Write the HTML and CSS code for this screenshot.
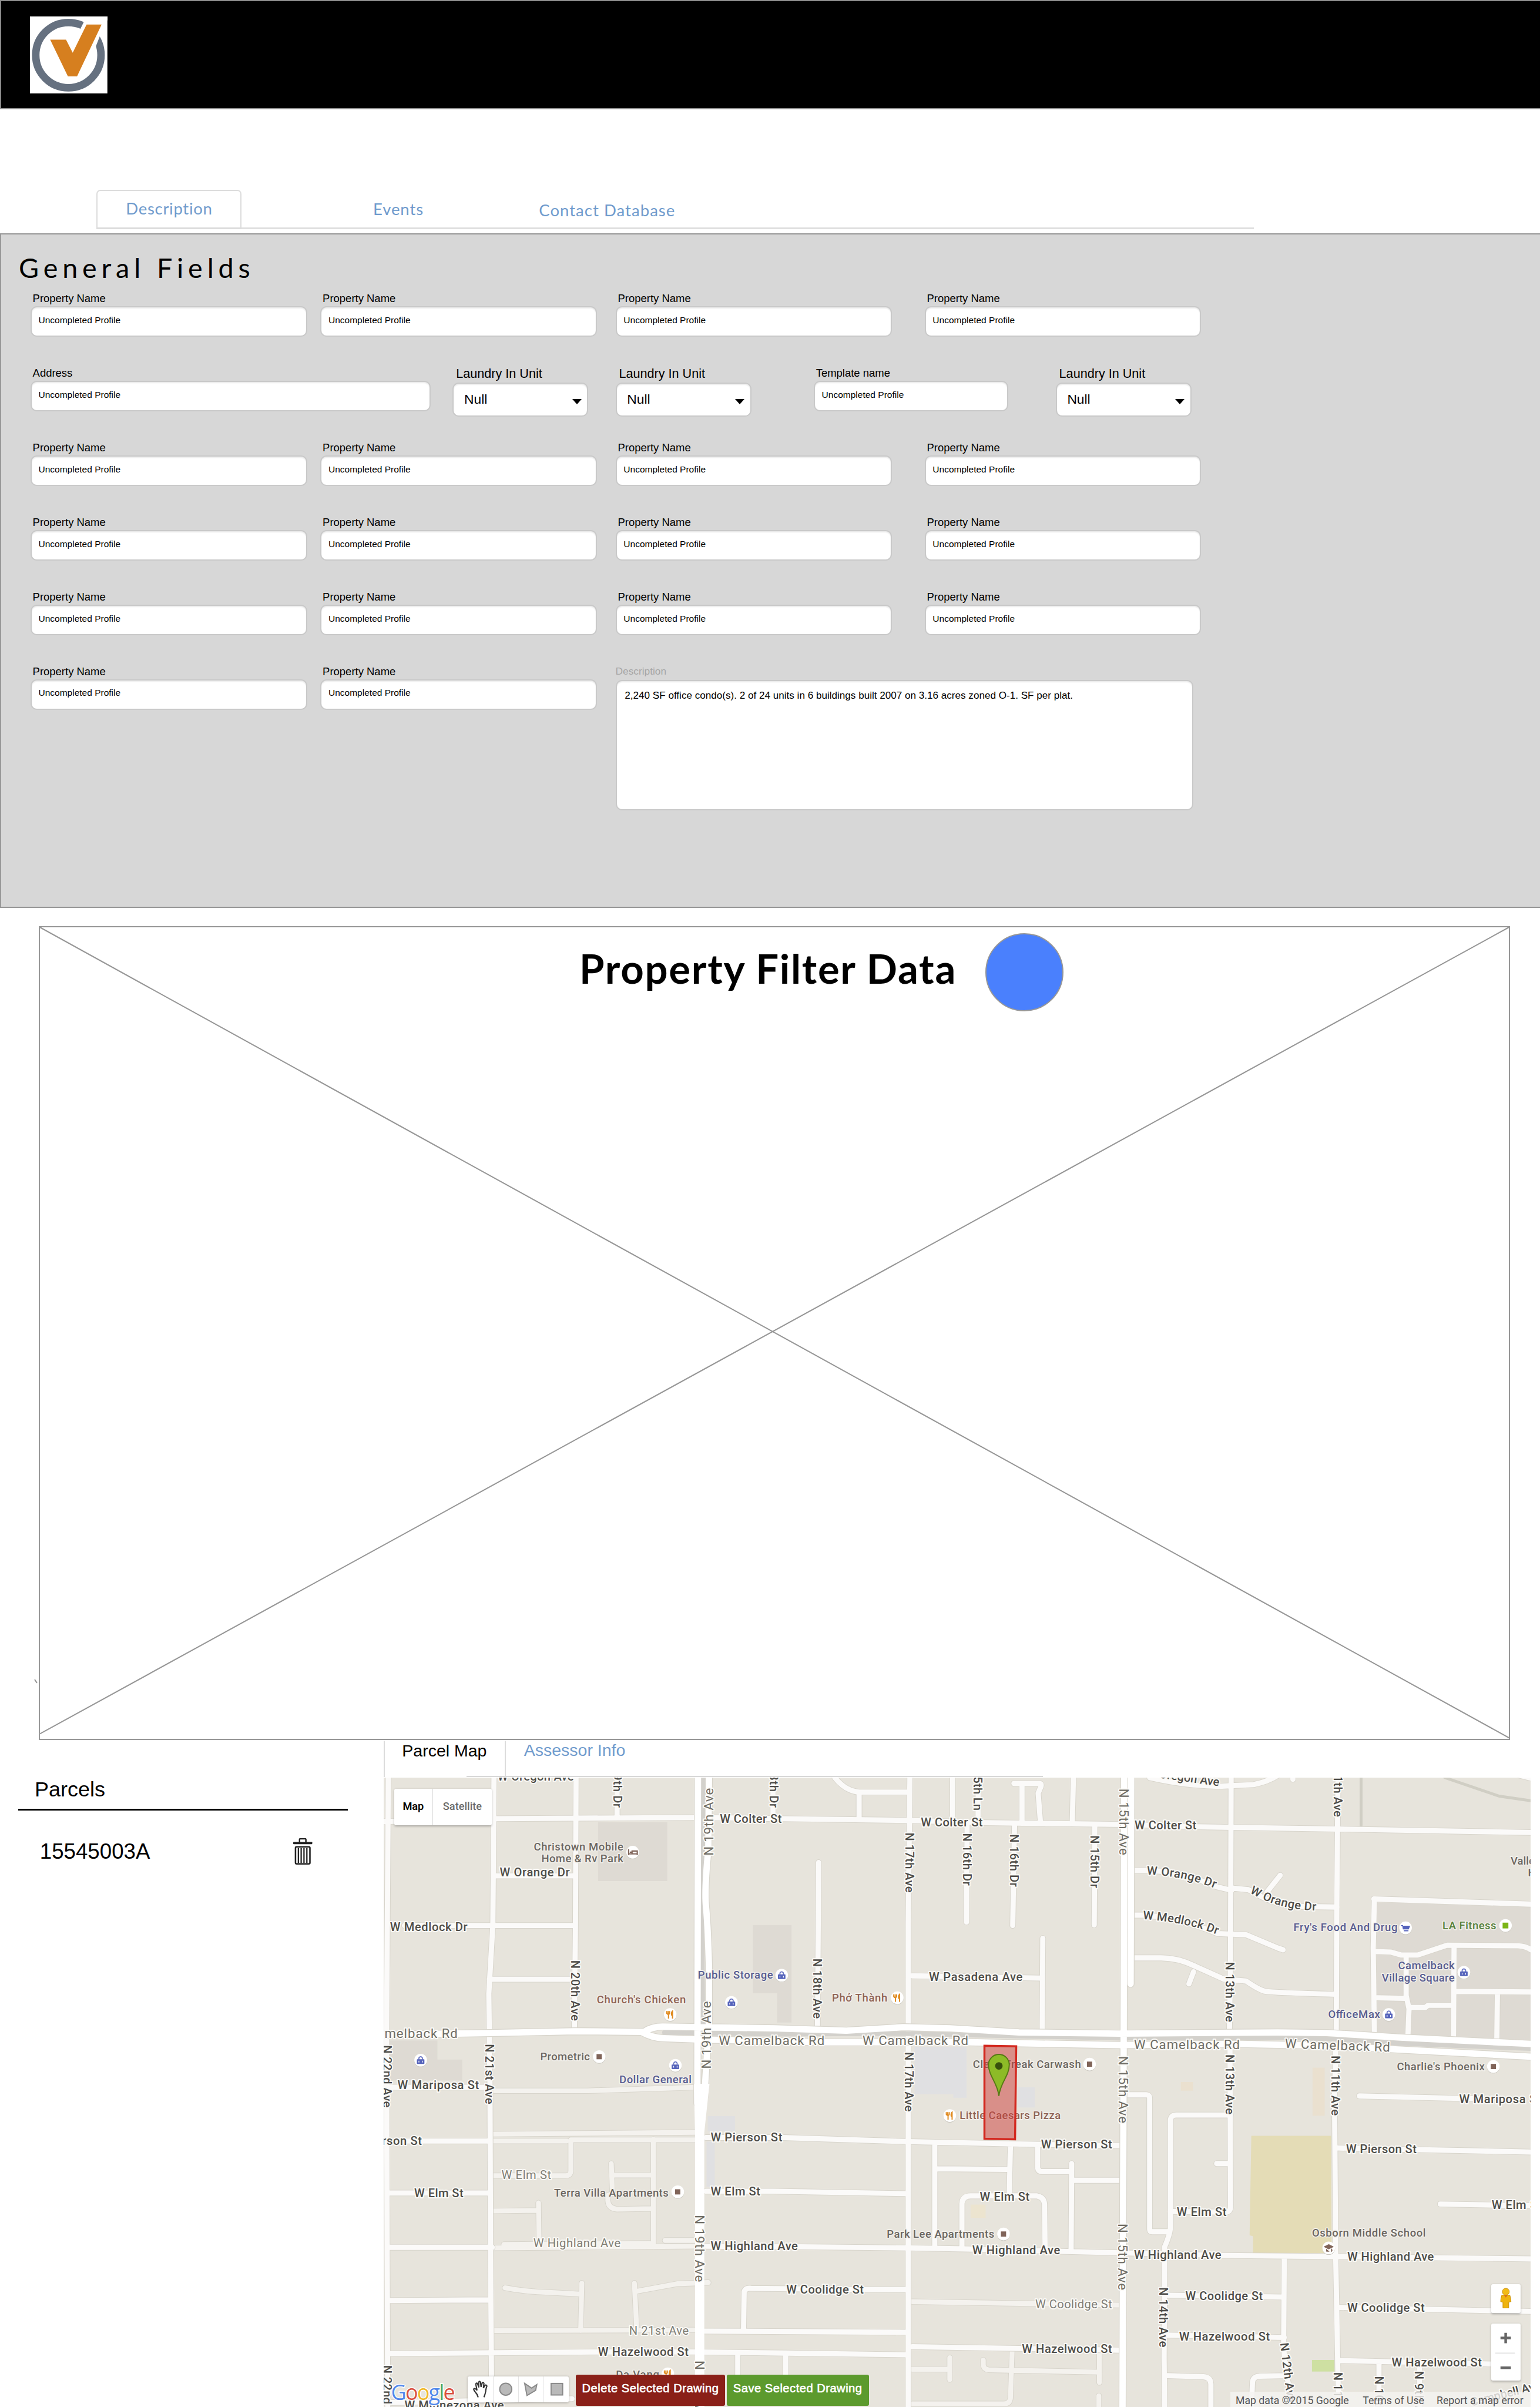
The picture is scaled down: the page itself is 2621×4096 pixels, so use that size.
FILE: index.html
```html
<!DOCTYPE html>
<html lang="en">
<head>
<meta charset="utf-8">
<title>Property Profile</title>
<link rel="stylesheet" href="styles.css">
</head>
<body>
<div class="page">
  <header class="topbar">
    <svg class="logo" viewBox="52 28 134 134">
      <rect x="52" y="28" width="134" height="134" fill="#fff"/>
      <circle cx="118.5" cy="95" r="56.5" fill="none" stroke="#667180" stroke-width="13"/>
      <path d="M139 50L151 26H190L173 62L166 80L140 70Z" fill="#fff"/>
      <path d="M87 68.3H114.4L126 90.7L150 42H176L133.5 131.7H117.7Z" fill="#d67f1f"/>
    </svg>
  </header>

  <nav class="tabs">
    <a class="tab tab-active">Description</a>
    <a class="tab tab-events">Events</a>
    <a class="tab tab-contact">Contact Database</a>
  </nav>

  <section class="panel">
    <h1 class="panel-title">General Fields</h1>
    <div class="row">
      <label class="field"><span class="label">Property Name</span><span class="input">Uncompleted Profile</span></label>
      <label class="field"><span class="label">Property Name</span><span class="input">Uncompleted Profile</span></label>
      <label class="field"><span class="label">Property Name</span><span class="input">Uncompleted Profile</span></label>
      <label class="field"><span class="label">Property Name</span><span class="input">Uncompleted Profile</span></label>
    </div>
    <div class="row row-address">
      <label class="field field-wide"><span class="label">Address</span><span class="input">Uncompleted Profile</span></label>
      <label class="field field-select"><span class="label">Laundry In Unit</span><span class="select">Null<i class="caret"></i></span></label>
      <label class="field field-select"><span class="label">Laundry In Unit</span><span class="select">Null<i class="caret"></i></span></label>
      <label class="field field-template"><span class="label">Template name</span><span class="input">Uncompleted Profile</span></label>
      <label class="field field-select"><span class="label">Laundry In Unit</span><span class="select">Null<i class="caret"></i></span></label>
    </div>
    <div class="row">
      <label class="field"><span class="label">Property Name</span><span class="input">Uncompleted Profile</span></label>
      <label class="field"><span class="label">Property Name</span><span class="input">Uncompleted Profile</span></label>
      <label class="field"><span class="label">Property Name</span><span class="input">Uncompleted Profile</span></label>
      <label class="field"><span class="label">Property Name</span><span class="input">Uncompleted Profile</span></label>
    </div>
    <div class="row">
      <label class="field"><span class="label">Property Name</span><span class="input">Uncompleted Profile</span></label>
      <label class="field"><span class="label">Property Name</span><span class="input">Uncompleted Profile</span></label>
      <label class="field"><span class="label">Property Name</span><span class="input">Uncompleted Profile</span></label>
      <label class="field"><span class="label">Property Name</span><span class="input">Uncompleted Profile</span></label>
    </div>
    <div class="row">
      <label class="field"><span class="label">Property Name</span><span class="input">Uncompleted Profile</span></label>
      <label class="field"><span class="label">Property Name</span><span class="input">Uncompleted Profile</span></label>
      <label class="field"><span class="label">Property Name</span><span class="input">Uncompleted Profile</span></label>
      <label class="field"><span class="label">Property Name</span><span class="input">Uncompleted Profile</span></label>
    </div>
    <div class="row">
      <label class="field"><span class="label">Property Name</span><span class="input">Uncompleted Profile</span></label>
      <label class="field"><span class="label">Property Name</span><span class="input">Uncompleted Profile</span></label>
      <label class="field field-description"><span class="label">Description</span><span class="textarea">2,240 SF office condo(s). 2 of 24 units in 6 buildings built 2007 on 3.16 acres zoned O-1. SF per plat.</span></label>
    </div>
  </section>

  <section class="placeholder">
    <svg class="cross" viewBox="0 0 2543 1405" preserveAspectRatio="none">
      <path d="M0 0L2545 1404M0 1396L2543 0"/>
    </svg>
    <svg class="tick" viewBox="0 0 6 8"><path d="M1 1L5 7"/></svg>
    <h2 class="placeholder-title">Property Filter Data</h2>
    <span class="dot"></span>
  </section>

  <div class="lower">
    <aside class="parcels">
      <h3 class="parcels-title">Parcels</h3>
      <div class="parcel">
        <span>15545003A</span>
        <svg class="trash" viewBox="0 0 33 46">
          <path d="M11 7V2.5Q11 1 12.500 1H20.500Q22 1 22 2.500V7" fill="none" stroke="#222" stroke-width="2.500"/>
          <rect x="0" y="6.500" width="33" height="3.800" rx="1" fill="#222"/>
          <rect x="4" y="15" width="25" height="29.500" rx="2" fill="none" stroke="#222" stroke-width="2.600"/>
          <path d="M9 17V43M13.800 17V43M18.700 17V43M23.700 17V43" stroke="#222" stroke-width="2.300"/>
        </svg>
      </div>
    </aside>

    <section class="map-area">
      <nav class="map-tabs">
        <a class="map-tab map-tab-active">Parcel Map</a>
        <a class="map-tab">Assessor Info</a>
      </nav>
      <div class="map">
        <svg class="map-canvas" viewBox="664 3076 1986 1090">
          <defs>
            <g id="pale">
              <path d="M854 3693L1205 3690M731 3705H981M988 3703H1207M988 3703V3756Q988 3765 979 3765H854M1131 3702V3888M1058 3744L1060 3796L1052 3799V3808Q1053 3822 1068 3823L1131 3822M1064 3764H1130M855 3826L932 3825M932 3812L933 3884M872 3884L1124 3882M1151 3877H1203M852 3890L1202 3887M874 3959Q910 3966 950 3967L1005 3970M1007 3951L1005 4033M1098 3951L1102 4030M1102 3965L1173 3952L1226 3950M856 4033L1202 4032M1579 3983L1940 3989M1579 4100H1644M1644 4080V4118M1702 4084V4093Q1703 4100 1711 4101L1902 4105M1903 4070V4123M1902 4146V4170M1752 4066L1749 4150Q1748 4160 1737 4160H1579M854 3618H1017L1202 3612"/>
            </g>
            <g id="minor">
              <path d="M672 3076L669 3520L670 3900L671 4166M855 3076L853 3331L846 3450L848 3606L849 3900L851 4166M997 3076L996 3331L994 3515M1068 3076V3145M1338 3076V3145M664 3152L858 3147L1202 3145L1353 3147L1568 3150L1706 3154L1943 3157L2072 3161L2314 3165L2650 3171M700 3332H993M847 3425H994M858 3246H996M673 3612H846M664 3705H848M673 3795H848M673 3889H852M673 3981L848 3980M673 4073L1035 4070H1200L1360 4072L1568 4075M664 4158L990 4151"/>
              <path d="M1445 3076Q1463 3099 1487 3101H1572M1487 3101V3148M1575 3076L1572 3331V3520L1572 4166M1649 3076V3152M1693 3076V3153M1755 3086H1800Q1803 3087 1802 3091L1797 3103L1801 3154M1769 3087V3155M1858 3076L1856 3156M1674 3156L1673 3326M1756 3158L1753 3332M1895 3160L1894 3331M1417 3223L1415 3508M1805 3354L1804 3514M1579 3419L1802 3423M1960 3237H1990Q2045 3238 2106 3265L2132 3271M1960 3314H1980Q2040 3318 2108 3346L2157 3348L2212 3371L2221 3374M2132 3267L2161 3270Q2212 3300 2250 3299L2314 3300M2193 3274L2216 3245M1960 3388H2010Q2040 3388 2070 3403L2119 3425L2157 3428Q2180 3444 2191 3446T2312 3451M2066 3412L2058 3433"/>
              <path d="M2131 3076L2130 3392L2128 3519M2129 3535L2130 3820Q2129 3829 2120 3828L2026 3827M1990 3076Q2050 3090 2110 3091L2170 3088Q2195 3083 2212 3072M2238 3070V3079M2316 3076L2314 3300L2313 3520L2310 3620L2312 3900L2317 4166M2378 3286L2650 3295M2379 3286L2377 3371L2379 3521M2380 3377L2408 3378L2425 3383H2454L2505 3366L2628 3367Q2642 3368 2650 3374M2434 3385V3453L2439 3476L2437 3524M2384 3457L2433 3458M2442 3474H2467L2472 3470H2514M2517 3367L2516 3524M2520 3446L2650 3447M2592 3449L2591 3531M2630 3072L2655 3078"/>
              <path d="M1222 3699H1355L1572 3706L1800 3711L1938 3713M1222 3792H1340L1568 3796M1222 3887L1385 3888L1572 3890L1684 3892L1836 3896L1960 3899L2115 3903L2314 3905L2650 3909M1218 4034L1568 4036M1287 4031L1288 3966Q1290 3959 1300 3960L1496 3962H1570M1277 4074V4120M1360 4074V4120M1618 3709V3888M1621 3753L1744 3754M1749 3710L1747 3799M1665 3888V3813Q1666 3800 1680 3800H1795Q1807 3802 1808 3814L1809 3892M1796 3713V3751Q1797 3758 1804 3758H1853M1855 3744L1854 3894M1860 3773H1940M1579 4061L1938 4067M1952 3625H1984Q1990 3625 1990 3631V3858Q1990 3862 1994 3862H2025M2130 3660H2036Q2026 3660 2026 3670V3856Q2024 3870 2016 3888L2015 4080L2016 4170M2106 3744H2127M2353 3627L2560 3632M2314 3717L2650 3724M2493 3814L2650 3817M2223 3908L2222 4060Q2224 4110 2240 4166M2021 3972L2219 3975M2021 4041L2223 4045M2319 3993L2650 4000M2319 4085L2582 4091M2387 4088V4170M2457 4092V4170M2021 4111L2083 4113Q2096 4114 2096 4126V4170M2166 4170L2168 4122Q2169 4113 2180 4112L2229 4111"/>
            </g>
            <g id="major">
              <path d="M1208 3076L1207 3640M1227 3076L1226 3200Q1219 3270 1222 3300T1227 3400V3500L1219 3630M1946 3076L1945 3520L1943 4170M1958 3076L1957 3433M664 3521L848 3518L995 3515L1115 3516Q1128 3507 1147 3507L1340 3510L1465 3514L1563 3508L1644 3510L1764 3517L1938 3519L2212 3517L2297 3518L2425 3526L2650 3537M1112 3517Q1128 3526 1147 3527L1202 3529L1427 3534H1677L1938 3539L2147 3537L2297 3540L2650 3559"/>
            </g>
            <g id="pin-bg"><circle r="11" fill="#c9c6be" cy="1"/><circle r="11" fill="#fff"/></g>
            <g id="shop"><use href="#pin-bg"/><path d="M-3 -1V-4Q0 -8 3 -4V-1" fill="none" stroke="#6672c4" stroke-width="1.800"/><rect x="-6.500" y="-1.500" width="13" height="8" rx="1" fill="#5563bb"/><path d="M-3 4V1M3 4V1" stroke="#fff" stroke-width="1.300"/></g>
            <g id="cart"><use href="#pin-bg"/><path d="M-8 -4H-5L-4 2H5L7 -3H-5" fill="#5563bb" stroke="#5563bb" stroke-width="1.500"/><path d="M-3 5H5" stroke="#5563bb" stroke-width="2"/></g>
            <g id="food"><use href="#pin-bg"/><path d="M-3 7V0M-6 -6V-2Q-3 2 -1 -2V-6M-3.500 -6V0M4 7V-6Q1.500 -4 2.500 1H4" fill="none" stroke="#e08a1e" stroke-width="2"/></g>
            <g id="place"><use href="#pin-bg"/><rect x="-4.500" y="-4.500" width="9" height="9" fill="#806459"/></g>
            <g id="lodging"><use href="#pin-bg"/><path d="M-7 5V-5M-7 3H8V5M8 3V-2H-1V2M-5 0H-2" fill="none" stroke="#806459" stroke-width="2.200"/></g>
            <path id="orange1" d="M1985 3244Q2045 3245 2104 3268"/>
            <path id="orange2" d="M2163 3275Q2215 3306 2283 3306"/>
            <path id="medlock" d="M1978 3321Q2050 3325 2108 3348"/>
          </defs>

          <rect x="664" y="3076" width="1986" height="1090" fill="#e7e4dc"/>
          <path d="M1035 3153H1155V3255H1035ZM1303 3331H1370V3500H1345V3449H1303ZM673 3531H757V3564H800V3600H673ZM2384 3292L2650 3297V3536L2384 3524Z" fill="#dedad3"/>
          <path d="M1225 3662H1272V3688H1225ZM1223 3706H1237V3784H1223ZM1583 3542H1673V3630H1650V3624H1583ZM1762 3612H1791V3647H1762Z" fill="#e0e0e2"/>
          <path d="M2272 3578H2293V3661H2272ZM2044 3603H2065V3618H2044Z" fill="#eae0cf"/>
          <path d="M1680 3815H1706V3838H1680Z" fill="#ece4cf"/>
          <path d="M2166 3696H2304L2305 3899H2169V3870L2163 3868Z" fill="#e4dcb6"/>
          <rect x="2271" y="4084" width="39" height="20" fill="#cee0a2"/>
          <path class="track" d="M2356 3076V3159M2501 3076L2595 3108L2650 3116"/>
          <use href="#pale" class="casing"/><use href="#pale" class="road road-pale"/>
          <use href="#minor" class="casing casing-minor"/><use href="#minor" class="road road-minor"/>
          <use href="#major" class="casing casing-major"/>
          <path class="rail" d="M1217 3076V3230L1214 3290L1217 3510M1150 3517L1340 3520L1563 3519L1938 3527L2212 3526L2297 3528L2425 3536L2650 3545"/>
          <use href="#major" class="road road-major"/>
          <path d="M1201 3606H1228L1219 3690V4166H1203V3690Z" fill="#fff"/>

          <g class="street">
            <text x="861" y="3081" textLength="132">W Oregon Ave</text>
            <text x="1983" y="3073" textLength="128" transform="rotate(8 1983 3073)">W Oregon Ave</text>
            <text x="675" y="3341" textLength="134">W Medlock Dr</text>
            <text x="1246" y="3154" textLength="107">W Colter St</text>
            <text x="1594" y="3160" textLength="107">W Colter St</text>
            <text x="1964" y="3166" textLength="107">W Colter St</text>
            <text x="865" y="3247" textLength="121">W Orange Dr</text>
            <text textLength="121"><textPath href="#orange1">W Orange Dr</textPath></text>
            <text textLength="121"><textPath href="#orange2">W Orange Dr</textPath></text>
            <text textLength="132"><textPath href="#medlock">W Medlock Dr</textPath></text>
            <text x="688" y="3615" textLength="141">W Mariposa St</text>
            <text x="2526" y="3640" textLength="141">W Mariposa St</text>
            <text x="606" y="3712" textLength="124">W Pierson St</text>
            <text x="1230" y="3706" textLength="124">W Pierson St</text>
            <text x="1802" y="3718" textLength="123">W Pierson St</text>
            <text x="2330" y="3726" textLength="122">W Pierson St</text>
            <text x="717" y="3802" textLength="85">W Elm St</text>
            <text x="1230" y="3799" textLength="86">W Elm St</text>
            <text x="1696" y="3808" textLength="86">W Elm St</text>
            <text x="2037" y="3835" textLength="86">W Elm St</text>
            <text x="2582" y="3823" textLength="86">W Elm St</text>
            <text x="1230" y="3894" textLength="151">W Highland Ave</text>
            <text x="1683" y="3901" textLength="152">W Highland Ave</text>
            <text x="1963" y="3909" textLength="151">W Highland Ave</text>
            <text x="2332" y="3912" textLength="150">W Highland Ave</text>
            <text x="1361" y="3969" textLength="134">W Coolidge St</text>
            <text x="2052" y="3980" textLength="134">W Coolidge St</text>
            <text x="2332" y="4001" textLength="134">W Coolidge St</text>
            <text x="1035" y="4077" textLength="157">W Hazelwood St</text>
            <text x="1769" y="4072" textLength="156">W Hazelwood St</text>
            <text x="2041" y="4050" textLength="157">W Hazelwood St</text>
            <text x="2409" y="4095" textLength="156">W Hazelwood St</text>
            <text x="700" y="4169" textLength="172">W Minnezona Ave</text>
            <text x="1608" y="3428" textLength="162">W Pasadena Ave</text>
            <text x="2547" y="4164" textLength="125" transform="rotate(-14 2547 4164)">Campbell Ave</text>
            <text transform="translate(988 3392) rotate(90)" textLength="105">N 20th Ave</text>
            <text transform="translate(1062 3036) rotate(90)" textLength="92">N 19th Dr</text>
            <text transform="translate(1332 3036) rotate(90)" textLength="92">N 18th Dr</text>
            <text transform="translate(1567 3171) rotate(90)" textLength="104">N 17th Ave</text>
            <text transform="translate(1566 3551) rotate(90)" textLength="103">N 17th Ave</text>
            <text transform="translate(1667 3172) rotate(90)" textLength="91">N 16th Dr</text>
            <text transform="translate(1748 3174) rotate(90)" textLength="91">N 16th Dr</text>
            <text transform="translate(1888 3176) rotate(90)" textLength="91">N 15th Dr</text>
            <text transform="translate(1685 3042) rotate(90)" textLength="91">N 15th Ln</text>
            <text transform="translate(1408 3389) rotate(90)" textLength="104">N 18th Ave</text>
            <text transform="translate(840 3537) rotate(90)" textLength="104">N 21st Ave</text>
            <text transform="translate(663 3539) rotate(90)" textLength="108">N 22nd Ave</text>
            <text transform="translate(663 4093) rotate(90)" textLength="108">N 22nd Ave</text>
            <text transform="translate(2007 3958) rotate(90)" textLength="104">N 14th Ave</text>
            <text transform="translate(2216 4055) rotate(83)" textLength="104">N 12th Ave</text>
            <text transform="translate(2309 3040) rotate(90)" textLength="104">N 11th Ave</text>
            <text transform="translate(2305 3557) rotate(90)" textLength="104">N 11th Ave</text>
            <text transform="translate(2309 4105) rotate(90)" textLength="104">N 11th Ave</text>
            <text transform="translate(2380 4112) rotate(90)" textLength="104">N 10th Ave</text>
            <text transform="translate(2449 4103) rotate(90)" textLength="96">N 9th Ave</text>
            <text transform="translate(2122 3395) rotate(90)" textLength="104">N 13th Ave</text>
            <text transform="translate(2122 3555) rotate(90)" textLength="104">N 13th Ave</text>
          </g>
          <g class="street street-light">
            <text x="868" y="3771" textLength="86">W Elm St</text>
            <text x="923" y="3889" textLength="151">W Highland Ave</text>
            <text x="1792" y="3994" textLength="133">W Coolidge St</text>
            <text x="1089" y="4040" textLength="103">N 21st Ave</text>
          </g>
          <g class="street street-major">
            <text x="609" y="3527" textLength="183">W Camelback Rd</text>
            <text x="1244" y="3539" textLength="183">W Camelback Rd</text>
            <text x="1493" y="3539" textLength="183">W Camelback Rd</text>
            <text x="1963" y="3546" textLength="183">W Camelback Rd</text>
            <text x="2224" y="3544" textLength="182" transform="rotate(2 2224 3544)">W Camelback Rd</text>
            <text transform="translate(1235 3211) rotate(-90)" textLength="117">N 19th Ave</text>
            <text transform="translate(1231 3580) rotate(-90)" textLength="117">N 19th Ave</text>
            <text transform="translate(1203 3833) rotate(90)" textLength="116">N 19th Ave</text>
            <text transform="translate(1203 4085) rotate(90)" textLength="116">N 19th Ave</text>
            <text transform="translate(1937 3095) rotate(90)" textLength="115">N 15th Ave</text>
            <text transform="translate(1936 3558) rotate(90)" textLength="116">N 15th Ave</text>
            <text transform="translate(1935 3848) rotate(90)" textLength="115">N 15th Ave</text>
          </g>
          <g class="poi">
            <text x="924" y="3202" textLength="155">Christown Mobile</text>
            <text x="937" y="3222" textLength="142">Home &amp; Rv Park</text>
            <text x="935" y="3565" textLength="86">Prometric</text>
            <text x="1684" y="3578" textLength="187">Clean Freak Carwash</text>
            <text x="959" y="3801" textLength="198">Terra Villa Apartments</text>
            <text x="1535" y="3872" textLength="186">Park Lee Apartments</text>
            <text x="2271" y="3870" textLength="197">Osborn Middle School</text>
            <text x="2418" y="3583" textLength="152">Charlie's Phoenix</text>
            <text x="2615" y="3227">Valley</text>
            <text x="2645" y="3247">Ho</text>
            <text x="1066" y="4116" textLength="75">Da Vang</text>
          </g>
          <g class="poi poi-shop">
            <text x="1072" y="3605" textLength="125">Dollar General</text>
            <text x="1208" y="3424" textLength="130">Public Storage</text>
            <text x="2239" y="3341" textLength="180">Fry's Food And Drug</text>
            <text x="2420" y="3408" textLength="98">Camelback</text>
            <text x="2392" y="3429" textLength="126">Village Square</text>
            <text x="2299" y="3492" textLength="90">OfficeMax</text>
          </g>
          <g class="poi poi-food">
            <text x="1033" y="3467" textLength="154">Church's Chicken</text>
            <text x="1440" y="3464" textLength="96">Phở Thành</text>
            <text x="1661" y="3667" textLength="175">Little Caesars Pizza</text>
          </g>
          <g class="poi poi-fitness"><text x="2497" y="3338" textLength="93">LA Fitness</text></g>

          <use href="#lodging" x="1095" y="3205"/>
          <use href="#place" x="1037" y="3559"/>
          <use href="#place" x="1886" y="3572"/>
          <use href="#place" x="1173" y="3793"/>
          <use href="#place" x="1737" y="3866"/>
          <use href="#place" x="2585" y="3576"/>
          <use href="#shop" x="1169" y="3574"/>
          <use href="#shop" x="1353" y="3418"/>
          <use href="#shop" x="1266" y="3465"/>
          <use href="#shop" x="728" y="3565"/>
          <use href="#shop" x="2534" y="3413"/>
          <use href="#shop" x="2404" y="3486"/>
          <use href="#cart" x="2433" y="3336"/>
          <use href="#food" x="1160" y="3486"/>
          <use href="#food" x="1553" y="3457"/>
          <use href="#food" x="1644" y="3661"/>
          <use href="#food" x="1156" y="4108"/>
          <g transform="translate(2606 3332)"><use href="#pin-bg"/><rect x="-5" y="-5" width="10" height="10" fill="#7cb518"/></g>
          <g transform="translate(2300 3890)"><use href="#pin-bg"/><path d="M-8 -2L0 -6L8 -2L0 2ZM-4 2V6H1M4 1Q8 4 4 7" fill="#806459" stroke="#806459"/></g>

          <path d="M1704 3540L1759 3541L1757 3702L1704 3701Z" fill="#cb3a35" fill-opacity=".5" stroke="#d3281f" stroke-width="3.500"/>
          <path d="M1729 3627C1727 3605 1711 3592 1711 3573A18 18 0 0 1 1747 3573C1747 3592 1731 3605 1729 3627Z" fill="#8dbb27" stroke="#567a14" stroke-width="2"/>
          <circle cx="1729" cy="3575" r="6.500" fill="#38500c"/>
        </svg>

        <div class="map-type"><b>Map</b><span>Satellite</span></div>
        <div class="google"><span class="g-blue">G</span><span class="g-red">o</span><span class="g-yellow">o</span><span class="g-blue">g</span><span class="g-green">l</span><span class="g-red">e</span></div>
        <div class="draw-tools">
          <span><svg viewBox="0 0 28 34"><path d="M10 31Q9 26 5 22Q1 17 3 16Q5 15 8 19L6 9Q6 6 8 6.500Q9 7 11 14L11 5Q12 2 14 5L15 13L17 6Q19 4 20 7L19 15L22 10Q25 9 25 12Q23 17 23 21Q22 26 20 31" fill="#fff" stroke="#333" stroke-width="2.200"/></svg></span>
          <span><svg viewBox="0 0 28 34"><circle cx="14" cy="17" r="10.500" fill="#b9b9b9" stroke="#8a8a8a" stroke-width="2"/></svg></span>
          <span><svg viewBox="0 0 28 34"><path d="M3 7L15 15L24 9L22 19L7 28Z" fill="#b9b9b9" stroke="#8a8a8a" stroke-width="2"/></svg></span>
          <span><svg viewBox="0 0 28 34"><rect x="4" y="7" width="20" height="20" fill="#b9b9b9" stroke="#8a8a8a" stroke-width="2"/></svg></span>
        </div>
        <div class="draw-actions"><button class="btn btn-delete">Delete Selected Drawing</button><button class="btn btn-save">Save Selected Drawing</button></div>
        <div class="pegman"><svg viewBox="0 0 22 36"><path d="M4 13Q2 20 2 24L6 25V35H16V25L20 24Q20 20 18 13Z" fill="#efb40f" stroke="#c98f0a"/><circle cx="11" cy="7" r="6" fill="#f2bb16" stroke="#c98f0a"/><path d="M8 13L11 17L14 13Z" fill="#dd6c1a"/></svg></div>
        <div class="zoom-control"><svg viewBox="0 0 50 99"><path d="M16 25H34M25 16V34M16 76.500H34" stroke="#666" stroke-width="4.500"/><path d="M7 51H41" stroke="#ddd" stroke-width="1.500"/></svg></div>
        <div class="attribution"><span>Map data ©2015 Google</span><span>Terms of Use</span><span>Report a map error</span></div>
      </div>
    </section>
  </div>
</div>
</body>
</html>
```
FILE: styles.css
```css
* { box-sizing: border-box; }

html, body { margin: 0; padding: 0; background: #fff; }

body {
  height: 4096px;
  overflow: hidden;
  font-family: "Liberation Sans", Arial, sans-serif;
  color: #000;
}

.page {
  width: 2666px;
  height: 4166px;
  zoom: 0.98315;
  display: flex;
  flex-direction: column;
  overflow: hidden;
}

h1, h2, h3 { margin: 0; font-weight: 400; }

.topbar {
  flex: none;
  height: 189px;
  padding: 26px 0 0 50px;
  background: #000;
  border: 2.1px solid #8d8d8d;
  border-right: 0;
}
.logo { display: block; width: 134px; height: 134px; }

.tabs {
  flex: none;
  display: flex;
  align-items: flex-start;
  height: 68px;
  width: 2004px;
  margin: 140px 0 7px 167px;
  border-bottom: 3.1px solid #dfdfdf;
  font: 28px/34px Lato, sans-serif;
  color: #6f9bcd;
}
.tab { white-space: nowrap; }
.tab-active {
  width: 251px;
  height: 68px;
  padding: 13px 0 0 49px;
  border: 2.1px solid #dcdcdc;
  border-bottom-width: 3.1px;
  border-radius: 7px 7px 0 0;
  letter-spacing: .7px;
}
.tab-events { margin: 16px 0 0 228px; width: 287px; letter-spacing: .9px; }
.tab-contact { margin-top: 18px; letter-spacing: 1.050px; }

.panel {
  flex: none;
  height: 1167px;
  padding: 29px 0 0 50.500px;
  background: #d7d7d7;
  border: 2.1px solid #979797;
  border-right: 0;
}
.panel-title {
  margin: 0 0 15px -20px;
  font: 47.500px/56px Lato, sans-serif;
  letter-spacing: 8px;
}

.row {
  display: grid;
  grid-template-columns: 502px 511px 535px 478px;
  height: 129.1px;
}
.row-address { grid-template-columns: 731px 282px 343px 419px 234px; }

.field { display: block; width: 479px; }
.field-wide { width: 693px; }
.field-select { width: 235px; }
.field-template { width: 337px; }
.field-description { width: 1000px; }

.label {
  display: block;
  margin: 0 0 2px 4px;
  font-size: 18.8px;
  line-height: 22px;
  white-space: nowrap;
}
.field-select .label { margin-left: 6px; font-size: 22px; line-height: 25px; }
.field-description .label { margin: 0 0 3px; font-size: 17.600px; color: #a6a6a6; }

.input, .select, .textarea {
  display: block;
  background: #fff;
  border: 2.1px solid #c9c9c9;
  border-radius: 11px;
  box-shadow: inset 0 2px 2px #ebebeb;
  white-space: nowrap;
}
.input { height: 53px; padding: 12px 0 0 12px; font-size: 15.800px; line-height: 20px; }
.select {
  display: flex;
  justify-content: space-between;
  height: 59px;
  padding: 14px 10px 0 18px;
  font-size: 23.200px;
  line-height: 26px;
}
.caret {
  margin-top: 13px;
  width: 0;
  height: 0;
  border: 8.200px solid transparent;
  border-top: 9.200px solid #000;
  border-bottom: 0;
}
.textarea { height: 226px; padding: 16px 0 0 14px; font-size: 17.400px; line-height: 20px; }

.placeholder {
  position: relative;
  flex: none;
  display: flex;
  align-items: flex-start;
  width: 2547px;
  height: 1409px;
  margin: 32px 0 1px 67px;
  padding-left: 934px;
  border: 2.1px solid #979797;
}
.cross { position: absolute; inset: 0; width: 100%; height: 100%; overflow: visible; }
.cross path, .tick path { fill: none; stroke: #979797; stroke-width: 2.1; }
.tick { position: absolute; left: -10px; top: 1301px; width: 6px; height: 8px; }
.placeholder-title {
  position: relative;
  width: 703px;
  margin-top: 30px;
  font: 700 70px/84px Lato, sans-serif;
  letter-spacing: 1.750px;
  white-space: nowrap;
}
.dot {
  position: relative;
  margin-top: 10px;
  width: 135px;
  height: 135px;
  border: 2.1px solid #979797;
  border-radius: 50%;
  background: #4a80fd;
}

.lower { flex: 1; display: flex; min-height: 0; }

.parcels { width: 570px; margin: 0 62px 0 32px; }
.parcels-title {
  height: 121px;
  padding: 63px 0 0 28px;
  border-bottom: 3.1px solid #000;
  font-size: 36.600px;
  line-height: 42px;
}
.parcel {
  display: flex;
  justify-content: space-between;
  align-items: center;
  height: 46px;
  margin-top: 48px;
  padding: 0 61px 0 37px;
  font-size: 37.300px;
}
.trash { width: 33px; height: 46px; }

.map-area { width: 1986px; }
.map-tabs {
  display: flex;
  height: 63px;
  font-size: 29px;
  line-height: 34px;
  color: #6f9bcd;
}
.map-tab {
  width: 932px;
  padding: 0 0 0 31px;
  background: linear-gradient(#d8d8d8, #d8d8d8) bottom left / 930px 2.1px no-repeat;
}
.map-tab-active {
  flex: none;
  width: 212px;
  padding: 1px 0 0 30px;
  color: #000;
  border: solid #dcdcdc;
  border-width: 0 2.1px;
  background: linear-gradient(#d8d8d8, #d8d8d8) bottom right / 66px 2.1px no-repeat;
}

.map { position: relative; height: 1090px; overflow: hidden; margin-top: 1px; }
.map-canvas { display: block; width: 1986px; height: 1090px; font-family: Roboto, sans-serif; }
.road, .casing, .track, .rail { fill: none; stroke-linecap: round; stroke-linejoin: round; }
.casing { stroke: #d8d5cc; stroke-width: 10.500px; }
.casing-minor { stroke-width: 11px; }
.casing-major { stroke-width: 13.500px; }
.road-pale { stroke: #f4f2ee; stroke-width: 8.500px; }
.road-minor { stroke: #fbfaf9; stroke-width: 9px; }
.road-major { stroke: #fff; stroke-width: 11px; }
.track { stroke: #d0cec4; stroke-width: 5px; }
.rail { stroke: #d3d1cc; stroke-width: 8px; }

.street text, .poi text { paint-order: stroke; stroke: #fbfaf7; stroke-width: 4px; stroke-linejoin: round; }
.street { font-size: 20.500px; font-weight: 500; fill: #4d4c48; }
.street-light { fill: #807e76; font-weight: 400; }
.street-major { font-size: 22.500px; font-weight: 400; fill: #6f6d65; }
.poi { font-size: 18.800px; font-weight: 500; fill: #6b6661; }
.poi text { stroke: #f3f1ec; stroke-width: 3px; }
.poi-shop { fill: #575c90; }
.poi-food { fill: #8f6253; }
.poi-fitness { fill: #55803a; }

.map-type, .google, .draw-tools, .draw-actions, .pegman, .zoom-control, .attribution { position: absolute; }

.map-type {
  left: 19px;
  top: 19px;
  display: flex;
  width: 168px;
  height: 63px;
  background: #fff;
  border-radius: 3px;
  box-shadow: 0 2px 4px rgba(0, 0, 0, .25);
  font: 18.500px/61px Roboto, sans-serif;
}
.map-type b { width: 67px; text-align: center; font-weight: 600; border-right: 2.1px solid #e8e8e8; }
.map-type span { flex: 1; text-align: center; font-weight: 500; color: #6b6b6b; }

.google {
  left: 13px;
  top: 1041px;
  font: 500 36.500px/44px "Open Sans", sans-serif;
  letter-spacing: -1.800px;
  -webkit-text-stroke: 3px #fff;
  paint-order: stroke;
}
.g-blue { color: #5087ea; }
.g-red { color: #d9503f; }
.g-yellow { color: #f0b828; }
.g-green { color: #4fa356; }

.draw-tools {
  left: 146px;
  top: 1036px;
  display: flex;
  width: 175px;
  height: 45px;
  background: #fff;
  border-radius: 3px;
  box-shadow: 0 1px 4px rgba(0, 0, 0, .25);
}
.draw-tools span { flex: 1; display: flex; align-items: center; justify-content: center; border-right: 1.1px solid #e5e5e5; }
.draw-tools span:last-child { border: 0; }
.draw-tools svg { width: 28px; height: 34px; }

.draw-actions { left: 333px; top: 1033px; display: flex; gap: 3px; }
.btn {
  width: 258px;
  height: 54px;
  padding: 0 0 5px;
  border: 0;
  border-radius: 3px;
  background: #8a2018;
  color: #fff;
  font: 20.500px/48px "Liberation Sans", Arial, sans-serif;
  letter-spacing: .5px;
  -webkit-text-stroke: .6px #fff;
  white-space: nowrap;
}
.btn-save { width: 246px; background: #5c9a2d; }

.pegman, .zoom-control {
  left: 1918px;
  width: 50px;
  background: #fff;
  border-radius: 3px;
  box-shadow: 0 2px 4px rgba(0, 0, 0, .25);
}
.pegman { top: 877px; height: 50px; padding: 6px 14px; }
.pegman svg, .zoom-control svg { display: block; width: 100%; }
.zoom-control { top: 945px; height: 99px; }

.attribution {
  right: 0;
  bottom: 0;
  display: flex;
  width: 520px;
  height: 27px;
  padding-left: 9px;
  background: rgba(245, 244, 241, .8);
  font: 18px/32px Roboto, sans-serif;
  color: #555;
  white-space: nowrap;
}
.attribution span { width: 220px; }
.attribution span + span { width: 128px; }
.attribution span + span + span { width: auto; }
```
